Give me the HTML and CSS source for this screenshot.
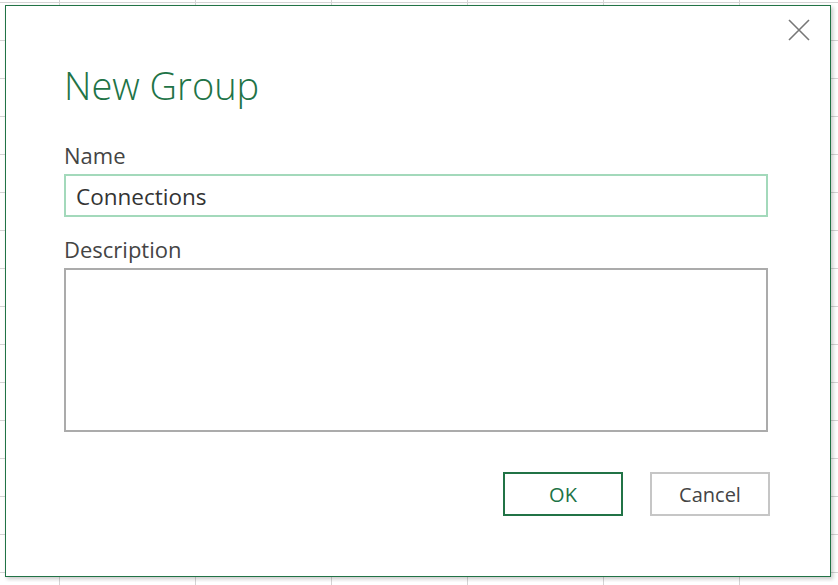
FILE: index.html
```html
<!DOCTYPE html>
<html lang="en">
<head>
<meta charset="utf-8">
<title>New Group</title>
<link rel="stylesheet" href="styles.css">
</head>
<body>
<div class="dialog">
  <div class="dialog-top">
    <button class="close" aria-label="Close">
      <svg width="22" height="22" viewBox="0 0 22 22"><path d="M1 1 L21 21 M21 1 L1 21" stroke="#777" stroke-width="1.6" fill="none"/></svg>
    </button>
  </div>
  <h1 class="title">New Group</h1>
  <label class="label">Name</label>
  <input class="field" type="text" value="Connections">
  <label class="label label-desc">Description</label>
  <textarea class="area"></textarea>
  <div class="actions">
    <button class="btn btn-primary">OK</button>
    <button class="btn btn-secondary">Cancel</button>
  </div>
</div>
</body>
</html>
```
FILE: styles.css
```css
html, body {
  margin: 0;
}
body {
  padding: 5px;
  font-family: "Open Sans", "Noto Sans", sans-serif;
  background-color: #ffffff;
  background-image:
    linear-gradient(to right, #d4d4d4 1px, transparent 1px),
    linear-gradient(to bottom, #d4d4d4 1px, transparent 1px);
  background-size: 136px 38px;
  background-position: 59px 2px;
}
.dialog {
  box-sizing: border-box;
  width: 826px;
  height: 572px;
  background: #fff;
  border: 1px solid #217346;
  box-shadow: 2px 2px 4px rgba(0, 0, 0, 0.22);
  padding: 13px 62px 0 58px;
  display: flex;
  flex-direction: column;
}
.dialog-top {
  display: flex;
  justify-content: flex-end;
  margin-right: -42px;
  height: 22px;
}
.close {
  border: 0;
  background: none;
  padding: 0;
  width: 22px;
  height: 22px;
  display: block;
  cursor: pointer;
}
.close svg { display: block; }
.title {
  margin: 20px 0 0 0;
  font-size: 38px;
  line-height: 48px;
  font-weight: 300;
  color: #217346;
}
.label {
  display: block;
  font-size: 22px;
  line-height: 28px;
  color: #444;
  margin-top: 32px;
}
.label-desc {
  margin-top: 18px;
}
.field {
  box-sizing: border-box;
  margin-top: 5px;
  width: 704px;
  height: 43px;
  border: 2px solid #a3d9bb;
  padding: 2px 10px 0 10px;
  font-family: "Open Sans", "Noto Sans", sans-serif;
  font-size: 22.5px;
  line-height: 37px;
  color: #333;
  outline: none;
  background: #fff;
}
.area {
  box-sizing: border-box;
  margin-top: 5px;
  width: 704px;
  height: 164px;
  border: 2px solid #ababab;
  resize: none;
  outline: none;
  font-family: "Open Sans", "Noto Sans", sans-serif;
  font-size: 20px;
  display: block;
}
.actions {
  display: flex;
  justify-content: flex-end;
  gap: 27px;
  margin-top: 40px;
  margin-right: -2px;
}
.btn {
  box-sizing: border-box;
  width: 120px;
  height: 44px;
  background: #fff;
  font-family: "Open Sans", "Noto Sans", sans-serif;
  font-size: 20px;
  padding: 0;
}
.btn-primary {
  border: 2px solid #217346;
  color: #217346;
}
.btn-secondary {
  border: 2px solid #c6c6c6;
  color: #444;
}
```
